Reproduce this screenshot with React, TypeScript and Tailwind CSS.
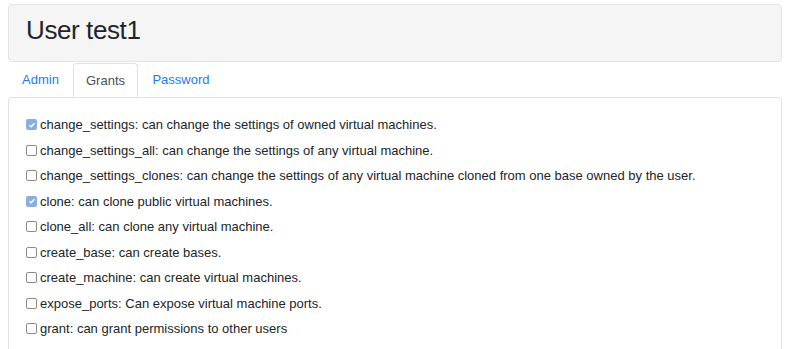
import React from "react";

const grants: [string, string, boolean][] = [
  ["change_settings", "can change the settings of owned virtual machines.", true],
  ["change_settings_all", "can change the settings of any virtual machine.", false],
  ["change_settings_clones", "can change the settings of any virtual machine cloned from one base owned by the user.", false],
  ["clone", "can clone public virtual machines.", true],
  ["clone_all", "can clone any virtual machine.", false],
  ["create_base", "can create bases.", false],
  ["create_machine", "can create virtual machines.", false],
  ["expose_ports", "Can expose virtual machine ports.", false],
  ["grant", "can grant permissions to other users", false],
];

function Box({ checked }: { checked: boolean }) {
  if (checked) {
    return (
      <span className="flex h-[11px] w-[11px] shrink-0 items-center justify-center rounded-[2px] bg-[#8aaee0]">
        <svg width="8" height="8" viewBox="0 0 8 8">
          <path d="M1.5 4.2 L3.2 5.8 L6.5 2.1" fill="none" stroke="#fff" strokeWidth="1.4" />
        </svg>
      </span>
    );
  }
  return <span className="h-[11px] w-[11px] shrink-0 rounded-[2px] border border-[#8a8a8a] bg-white" />;
}

export default function App() {
  return (
    <div className="min-h-[349px] bg-white px-2 pt-1 text-[#212529]" style={{ fontFamily: '"Liberation Sans", Arial, sans-serif' }}>
      <div className="flex h-[58px] items-center rounded-[4px] border border-[#e3e3e3] bg-[#f5f5f5] pl-[17px]">
        <h2 className="pb-[6px] text-[26px] leading-none tracking-[-0.4px] text-[#212529]">User test1</h2>
      </div>
      <div className="mt-[1px] flex h-[34px] text-[13px]">
        <div className="flex w-[65px] items-center justify-center text-[#1a7cf5]">Admin</div>
        <div className="flex w-[65px] items-center justify-center rounded-t-[4px] border border-b-0 border-[#dee2e6] text-[#495057]">Grants</div>
        <div className="flex w-[86px] items-center justify-center text-[#1a7cf5]">Password</div>
      </div>
      <div className="h-[260px] rounded-t-[4px] border border-b-0 border-[#dee2e6] pl-[17px] pt-[14px] text-[13px]">
        {grants.map(([k, d, c]) => (
          <div key={k} className="flex h-[25.5px] items-center">
            <Box checked={c} />
            <span className="ml-[3px]">{k}: {d}</span>
          </div>
        ))}
      </div>
    </div>
  );
}
